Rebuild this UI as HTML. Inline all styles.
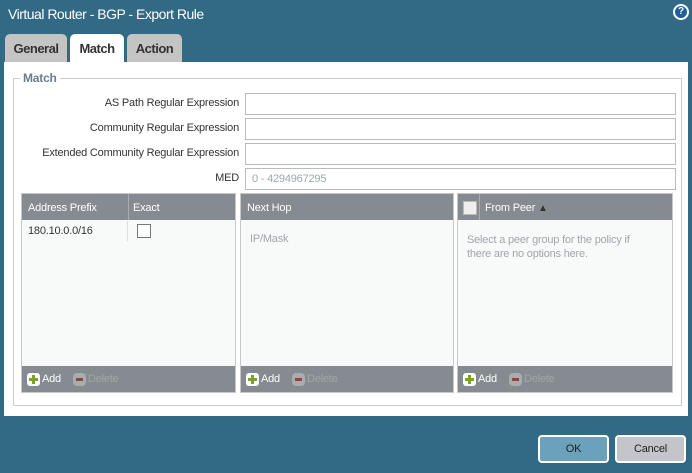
<!DOCTYPE html><html><head><style>
body{margin:0;width:692px;height:473px;background:#326984;font-family:"Liberation Sans",sans-serif;position:relative;overflow:hidden;font-size:11px;letter-spacing:-0.2px}
div{position:absolute;box-sizing:border-box}
.title{left:8px;top:6px;color:#fff;font-size:14px;letter-spacing:-0.5px}
.help{left:673px;top:4px;width:16px;height:16px;border-radius:50%;background:#1f5f9a;border:2px solid #fff;color:#fff;font-size:10px;font-weight:bold;text-align:center;line-height:12px}
.tab{top:34px;height:28px;background:#c4c4c4;border-radius:5px 5px 0 0;font-weight:bold;font-size:13px;text-align:center;line-height:30px;color:#333;letter-spacing:-0.5px}
.panel{left:4px;top:62px;width:684px;height:354px;background:#fff}
.fs{left:13px;top:78px;width:669px;height:328px;border:1px solid #ccc}
.leg{left:20px;top:71px;background:#fff;padding:0 3px;color:#6c7d8e;font-weight:bold;font-size:12px}
.lbl{right:453px;color:#333;text-align:right}
.inp{left:245px;width:431px;height:22px;border:1px solid #bbb;background:#fff;color:#9aa;padding:4px 6px}
.grid{top:193px;height:200px;border:1px solid #c8c8c8;background:#f8fafa}
.gh{left:0;top:0;right:0;height:26px;background:#858b90;color:#fff;line-height:28px}
.gf{left:0;bottom:0;right:0;height:26px;background:#858b90;color:#fff;line-height:26px}
.add{display:inline-block;vertical-align:middle;width:13px;height:13px;background:#fff;border-radius:3px;position:relative;margin:0 2px 0 5px}
.add:before{content:"";position:absolute;left:2px;top:5px;width:9px;height:3px;background:#7ba32b}
.add:after{content:"";position:absolute;left:5px;top:2px;width:3px;height:9px;background:#7ba32b}
.del{display:inline-block;vertical-align:middle;width:13px;height:13px;background:#a8adb0;border-radius:4px;position:relative;margin:0 2px 0 12px}
.del:before{content:"";position:absolute;left:3px;top:5px;width:7px;height:3px;background:#8a4a3a}
.gray{color:#a0a6aa}
.btn{top:435px;height:28px;border:2px solid #fff;border-radius:4px;text-align:center;line-height:24px;color:#222}
</style></head><body>
<div class="title">Virtual Router - BGP - Export Rule</div>
<div class="help">?</div>
<div class="tab" style="left:5px;width:62px">General</div>
<div class="tab" style="left:70px;width:54px;background:#fff;height:30px">Match</div>
<div class="tab" style="left:127px;width:55px">Action</div>
<div class="panel"></div>
<div class="fs"></div>
<div class="leg">Match</div>
<div class="lbl" style="top:97px">AS Path Regular Expression</div>
<div class="lbl" style="top:122px">Community Regular Expression</div>
<div class="lbl" style="top:147px">Extended Community Regular Expression</div>
<div class="lbl" style="top:172px">MED</div>
<div class="inp" style="top:93px"></div>
<div class="inp" style="top:118px"></div>
<div class="inp" style="top:143px"></div>
<div class="inp" style="top:168px">0 - 4294967295</div>

<div class="grid" style="left:21px;width:215px">
<div class="gh"><span style="position:absolute;left:6px">Address Prefix</span><span style="position:absolute;left:106px;top:0;height:26px;border-left:1px solid #a8adb0"></span><span style="position:absolute;left:111px">Exact</span></div>
<div style="left:6px;top:31px;color:#333">180.10.0.0/16</div>
<div style="left:105px;top:27px;height:20px;border-left:1px solid #ddd"></div>
<div style="left:115px;top:30px;width:14px;height:14px;border:1px solid #777;background:#fff"></div>
<div class="gf"><span class="add"></span>Add<span class="del"></span><span class="gray">Delete</span></div>
</div>
<div class="grid" style="left:240px;width:214px">
<div class="gh"><span style="position:absolute;left:6px">Next Hop</span></div>
<div class="gray" style="left:9px;top:39px">IP/Mask</div>
<div class="gf"><span class="add"></span>Add<span class="del"></span><span class="gray">Delete</span></div>
</div>
<div class="grid" style="left:457px;width:216px">
<div class="gh"><span style="position:absolute;left:5px;top:7px;width:12px;height:12px;background:#eee;border:1px solid #bbb"></span><span style="position:absolute;left:21px;top:0;height:26px;border-left:1px solid #a8adb0"></span><span style="position:absolute;left:27px">From Peer <span style="font-size:10px;color:#333">▲</span></span></div>
<div class="gray" style="left:9px;top:39px;line-height:14px;width:185px">Select a peer group for the policy if there are no options here.</div>
<div class="gf"><span class="add"></span>Add<span class="del"></span><span class="gray">Delete</span></div>
</div>

<div class="btn" style="left:538px;width:71px;background:#6aa1bb">OK</div>
<div class="btn" style="left:615px;width:71px;background:#c3c5cb">Cancel</div>
</body></html>
